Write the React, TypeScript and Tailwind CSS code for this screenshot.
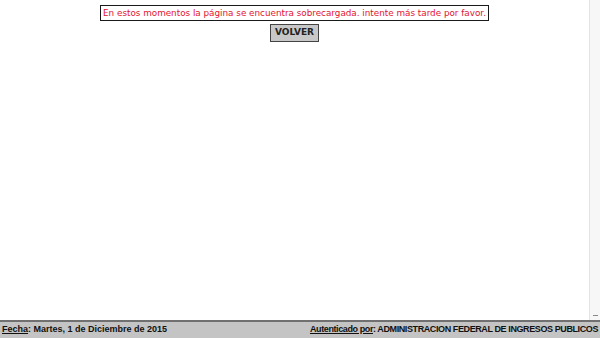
import React from "react";

export default function App() {
  return (
    <div className="flex h-[338px] w-[600px] flex-col bg-white">
      <div className="flex flex-1">
        <div className="flex flex-1 flex-col items-center pt-[5px]">
          <div className="border border-[#1a1a1a] px-[2px] py-[1px] text-[8.8px] leading-[12px] text-[#e3122f] [font-family:'DejaVu_Sans',Verdana,sans-serif]">
            En estos momentos la página se encuentra sobrecargada. intente más tarde por favor.
          </div>
          <button className="mt-[3px] h-[18px] w-[49px] border border-[#444] bg-[#c8c8c8] text-[9px] font-bold text-[#222] [font-family:'DejaVu_Sans',Verdana,sans-serif]">
            VOLVER
          </button>
        </div>
        <div className="flex w-[11px] flex-col justify-end border-l border-[#e4e4e4] bg-[#f7f7f7] pb-[4px]">
          <div className="mx-auto h-[1px] w-[5px] bg-[#888]" />
        </div>
      </div>
      <footer className="flex h-[18px] items-center justify-between border-t-2 border-[#707070] bg-[#c4c4c4] px-[2px] text-[9px] font-bold text-[#111] [font-family:'Liberation_Sans',Arial,sans-serif]">
        <span>
          <span className="underline">Fecha</span>: Martes, 1 de Diciembre de 2015
        </span>
        <span className="tracking-[-0.4px]">
          <span className="underline">Autenticado por</span>: ADMINISTRACION FEDERAL DE INGRESOS PUBLICOS
        </span>
      </footer>
    </div>
  );
}
